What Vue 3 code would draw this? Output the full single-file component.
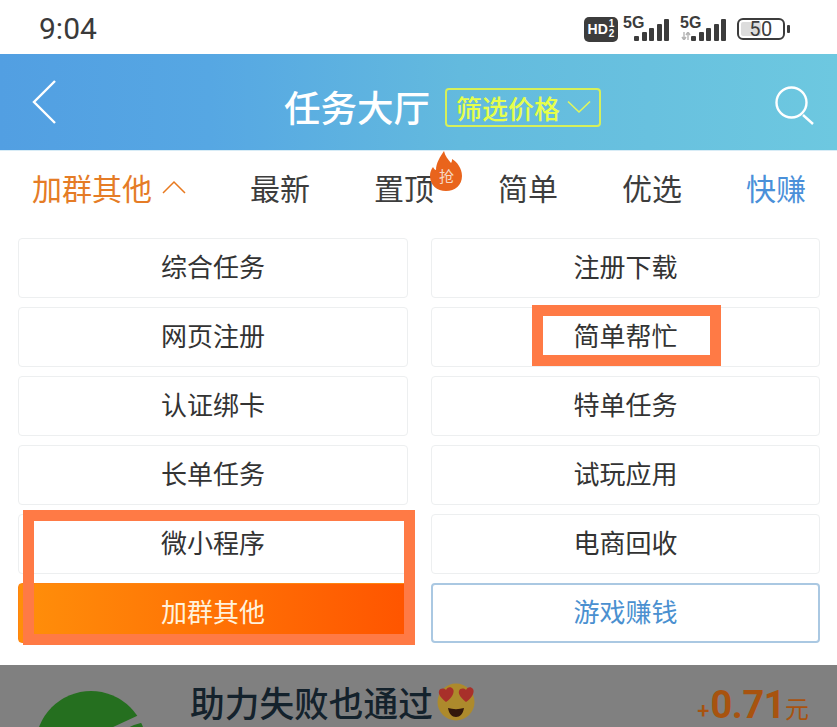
<script setup>
const cards = [
  { label: '综合任务' }, { label: '注册下载' },
  { label: '网页注册' }, { label: '简单帮忙' },
  { label: '认证绑卡' }, { label: '特单任务' },
  { label: '长单任务' }, { label: '试玩应用' },
  { label: '微小程序' }, { label: '电商回收' },
  { label: '加群其他', kind: 'active' }, { label: '游戏赚钱', kind: 'blue' },
]
const bars = [5, 9, 13, 17, 22]
</script>

<template>
  <div class="page">
    <div class="status">
      <span class="time">9:04</span>
      <div class="indicators">
        <span class="hd"><b>HD</b><i><em>1</em><em>2</em></i></span>
        <span class="net"><small>5G</small><span class="bars"><u v-for="b in bars" :key="b" :style="{ height: b + 'px' }"></u></span></span>
        <span class="net net2"><small>5G</small>
          <svg class="arrows" width="10" height="8" viewBox="0 0 10 8"><path d="M3 0v8M1 5l2 3 2-3M7 8V0M5 3l2-3 2 3" fill="none" stroke="#b4b4b4" stroke-width="1.4"/></svg>
          <span class="bars"><u v-for="b in bars" :key="b" :style="{ height: b + 'px' }"></u></span></span>
        <span class="battery"><span class="batbody"><span class="fill"></span><span class="num">50</span></span><span class="cap"></span></span>
      </div>
    </div>

    <header class="head">
      <svg class="back" width="26" height="46" viewBox="0 0 26 46"><path d="M25 2 4 23l21 21" fill="none" stroke="#fff" stroke-width="2.4"/></svg>
      <div class="titlegroup">
        <h1>任务大厅</h1>
        <div class="filter">筛选价格
          <svg width="24" height="14" viewBox="0 0 24 14"><path d="M1 1.5 12 12 23 1.5" fill="none" stroke="#e2f75a" stroke-width="1.6"/></svg>
        </div>
      </div>
      <svg class="search" width="40" height="40" viewBox="0 0 40 40"><circle cx="16.5" cy="16.5" r="15" fill="none" stroke="#fff" stroke-width="2.4"/><path d="m28 29 10 9" stroke="#fff" stroke-width="2.4" fill="none"/></svg>
    </header>

    <nav class="tabs">
      <span class="tab cur">加群其他
        <svg width="24" height="14" viewBox="0 0 24 14"><path d="M1 13 12 2l11 11" fill="none" stroke="#e8791f" stroke-width="1.5"/></svg>
      </span>
      <span class="tab">最新</span>
      <span class="tab hot">置顶
        <span class="flame">
          <svg width="33" height="40" viewBox="0 0 33 40"><path d="M14 0c1 5 4 8 7 12 1-1 1-3 1-4 5 3 10 9 10 17 0 9-7 15-16 15S0 34 0 25c0-4 1-6 3-9 1 2 2 3 3 3 0-7 4-13 8-19Z" fill="#e9641c"/></svg>
          <span>抢</span>
        </span>
      </span>
      <span class="tab">简单</span>
      <span class="tab">优选</span>
      <span class="tab quick">快赚</span>
    </nav>

    <section class="grid">
      <div v-for="c in cards" :key="c.label" class="card" :class="c.kind">{{ c.label }}</div>
    </section>

    <section class="task">
      <svg class="logo" width="115" height="36" viewBox="0 0 115 36">
        <circle cx="55" cy="55.5" r="55.5" fill="#256f1f"/>
        <path d="M75 37 103 24 115 20v9L98 34 85 40Z" fill="#808080"/>
      </svg>
      <div class="tasktitle">助力失败也通过
        <svg width="38" height="38" viewBox="0 0 38 38">
          <circle cx="19" cy="19" r="18.5" fill="#ad8a2c"/>
          <path d="M11 25c5 1.500 11 1.500 16 0-1 6-4 9-8 9s-7-3-8-9Z" fill="#33180c"/>
          <path d="M9 19C4 15 1 11 2 8c1-3 5-3 7-1 1-3 5-4 7-1 2 3-1 9-7 13ZM29 19c6-4 9-10 7-13-2-3-6-2-7 1-2-2-6-2-7 1-1 3 2 7 7 11Z" fill="#a8302a"/>
        </svg>
      </div>
      <div class="price"><span class="plus">+</span><b>0.71</b><span class="unit">元</span></div>
    </section>

    <div class="mark mark1"></div>
    <div class="mark mark2"></div>
  </div>
</template>

<style>
html, body { margin: 0; background: #fff; }
</style>

<style scoped>
.page {
  position: relative;
  width: 837px;
  height: 727px;
  overflow: hidden;
  background: #fff;
  font-family: "Noto Sans CJK SC", "Noto Sans", sans-serif;
}
.status {
  height: 54px;
  box-sizing: border-box;
  padding: 0 47px 0 39px;
  display: flex;
  align-items: center;
  justify-content: space-between;
}
.time { font: 400 30px/1 Roboto, sans-serif; color: #3a3a3a; padding-top: 3px; }
.indicators { display: flex; align-items: center; gap: 5px; padding-top: 4px; }
.hd {
  width: 34px; height: 25px; border-radius: 5px; background: #3c3c3c; color: #fff;
  display: flex; align-items: center; justify-content: center; gap: 1px;
  font-family: "Liberation Sans", sans-serif;
}
.hd b { font-size: 14px; }
.hd i { display: flex; flex-direction: column; font-style: normal; font-weight: 700; font-size: 10px; line-height: 10px; }
.hd em { font-style: normal; }
.net { position: relative; width: 46px; height: 25px; display: block; }
.net small { position: absolute; left: 0; top: -2px; font: 700 16px/16px "Liberation Sans", sans-serif; color: #3c3c3c; }
.bars { position: absolute; right: 0; bottom: 1px; display: flex; align-items: flex-end; gap: 2.5px; }
.bars u { display: block; width: 5px; background: #3c3c3c; border-radius: 1px; }
.net2 { margin-left: 6px; }
.arrows { position: absolute; left: 1px; bottom: 2px; }
.battery { display: flex; align-items: center; margin-left: 6px; }
.batbody {
  position: relative; width: 48px; height: 22px; box-sizing: border-box;
  border: 2px solid #3c3c3c; border-radius: 6px;
  display: flex; align-items: center; justify-content: center;
}
.fill { position: absolute; left: 2px; top: 2px; bottom: 2px; width: 20px; background: #dcdcdc; border-radius: 2px; }
.num { position: relative; font: 400 20px/1 Roboto, sans-serif; color: #3c3c3c; letter-spacing: 0.5px; }
.cap { width: 3px; height: 8px; margin-left: 2px; background: #3c3c3c; border-radius: 1px; }

.head {
  height: 97px;
  box-sizing: border-box;
  padding: 0 22px 0 30px;
  display: flex;
  align-items: center;
  background: linear-gradient(90deg, #529fe2 0%, #56a7e3 25%, #63bade 55%, #6dc8e0 100%);
  border-bottom: 1px solid #d8ecf6;
}
.titlegroup { display: flex; align-items: center; gap: 15px; margin-left: 228px; margin-top: 10px; }
h1 { margin: 0; font-size: 36.5px; line-height: 44px; font-weight: 500; color: #fff; width: 146px; white-space: nowrap; }
.filter {
  box-sizing: border-box; width: 156px; height: 39px; padding-left: 9px;
  display: flex; align-items: center; gap: 7px;
  border: 2px solid #d6f05a; border-radius: 4px;
  color: #e6ff4a; font-size: 26px; font-weight: 500; white-space: nowrap;
}
.search { margin-left: auto; margin-top: 8px; }

.tabs {
  height: 77px;
  box-sizing: border-box;
  padding: 0 31px 6px 32px;
  display: flex;
  align-items: center;
  justify-content: space-between;
}
.tab { position: relative; font-size: 30px; line-height: 40px; color: #3d3d3d; white-space: nowrap; }
.cur { color: #e57c26; display: flex; align-items: center; gap: 10px; }
.quick { color: #4a90d9; }
.flame { position: absolute; left: 56px; top: -16px; width: 33px; height: 40px; }
.flame svg { display: block; }
.flame span { position: absolute; left: 9px; top: 15px; font-size: 15px; line-height: 20px; color: #f6d9c4; }

.grid {
  padding: 10px 16px 0 18px;
  display: grid;
  grid-template-columns: 390px 389px;
  column-gap: 23px;
  row-gap: 9px;
}
.card {
  box-sizing: border-box;
  height: 60px;
  padding-bottom: 6px;
  display: flex; align-items: center; justify-content: center;
  border: 1px solid #edeff0;
  border-radius: 4px;
  background: #fff;
  color: #333;
  font-size: 26px;
}
.active {
  background: linear-gradient(90deg, #ff8f0a, #ff5500);
  border-color: #ff8410;
  color: #fff2dc;
}
.blue { border: 2px solid #aac8e2; color: #4a90d0; }

.task {
  position: absolute; left: 0; right: 0; top: 665px; bottom: 0;
  background: #808080;
}
.logo { position: absolute; left: 36px; top: 26px; }
.tasktitle {
  position: absolute; left: 190px; top: 15px;
  display: flex; align-items: center; gap: 4px;
  font-size: 34.7px; line-height: 44px; font-weight: 500; color: #14222c; white-space: nowrap;
}
.price { position: absolute; right: 28px; top: 21px; height: 42px; display: flex; align-items: baseline; color: #a8530f; font-family: Roboto, sans-serif; white-space: nowrap; line-height: 1; }
.price .plus { font-size: 22px; font-weight: 500; line-height: 1; margin-right: 1px; }
.price b { font-size: 38px; line-height: 1; letter-spacing: -0.5px; }
.price .unit { font-size: 24px; line-height: 1; font-family: "Noto Sans CJK SC", sans-serif; }

.mark { position: absolute; box-sizing: border-box; border: 11px solid #ff7a45; pointer-events: none; }
.mark1 { left: 23px; top: 510px; width: 392px; height: 135px; }
.mark2 { left: 532px; top: 305px; width: 189px; height: 61px; }
</style>
